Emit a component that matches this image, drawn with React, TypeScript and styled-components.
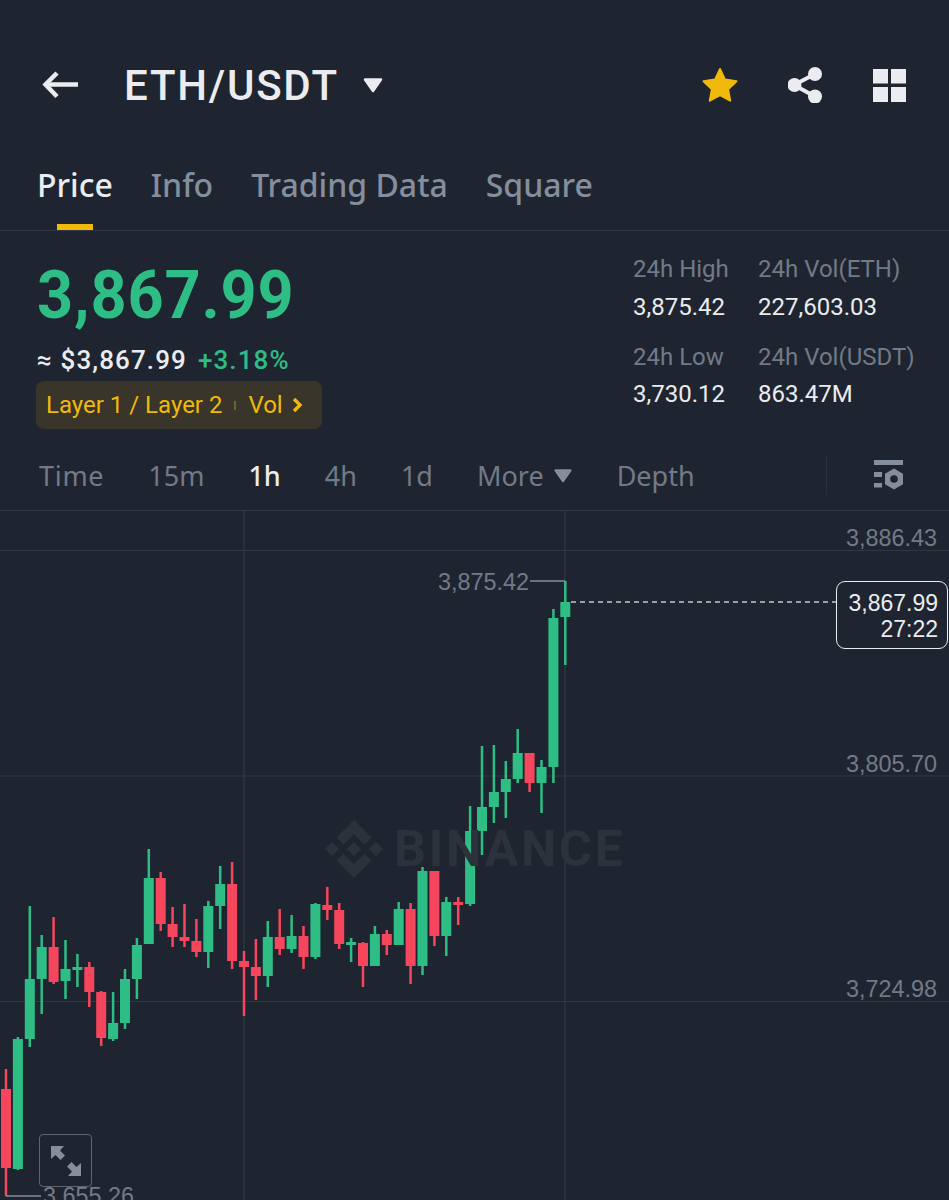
import * as React from 'react';
import styled, { createGlobalStyle } from 'styled-components';

const Colors = {
  bg: '#1f2530',
  line: '#323843',
  text: '#eaecef',
  muted: '#848e9c',
  mutedDark: '#727a87',
  green: '#2ebd85',
  red: '#f6465d',
  gold: '#f0b90b',
};

const GlobalStyle = createGlobalStyle`
  html, body {
    margin: 0;
    padding: 0;
    background: ${Colors.bg};
  }
  * { box-sizing: border-box; }
`;

const Page = styled.div`
  width: 949px;
  height: 1200px;
  overflow: hidden;
  background: ${Colors.bg};
  color: ${Colors.text};
  font-family: 'Noto Sans', sans-serif;
`;

const TopBar = styled.header`
  display: flex;
  align-items: center;
  height: 130px;
  margin-top: 20px;
  padding: 0 43px 0 42px;
`;

const Pair = styled.h1`
  margin: 0 24px 0 46px;
  font-family: Roboto, sans-serif;
  font-size: 42px;
  font-weight: 500;
  letter-spacing: 1.75px;
`;

const TopIcons = styled.div`
  display: flex;
  align-items: center;
  gap: 49.5px;
  margin-left: auto;
`;

const Tabs = styled.nav`
  display: flex;
  gap: 38px;
  height: 81px;
  padding: 17px 0 0 37px;
  border-bottom: 1px solid ${Colors.line};
`;

const Tab = styled.div<{ $active?: boolean }>`
  position: relative;
  height: 63px;
  font-size: 32px;
  font-weight: 500;
  line-height: 36px;
  color: ${(p) => (p.$active ? Colors.text : Colors.muted)};

  ${(p) =>
    p.$active &&
    `&::after {
      content: '';
      position: absolute;
      left: 20px;
      bottom: 0;
      width: 36px;
      height: 6px;
      background: ${Colors.gold};
    }`}
`;

const Summary = styled.section`
  display: flex;
  justify-content: space-between;
  height: 210px;
  padding: 23px 37px 0 37px;
`;

const PriceColumn = styled.div`
  display: flex;
  flex-direction: column;
  align-items: flex-start;
`;

const BigPrice = styled.div`
  height: 84px;
  font-family: Roboto, sans-serif;
  font-size: 66px;
  font-weight: 700;
  line-height: 84px;
  letter-spacing: 0.9px;
  color: ${Colors.green};
  transform: scaleX(0.955);
  transform-origin: left center;
`;

const FiatRow = styled.div`
  display: flex;
  gap: 11px;
  height: 43px;
  font-family: Roboto, sans-serif;
  font-size: 26px;
  font-weight: 500;
  line-height: 45px;
  letter-spacing: 1.1px;
`;

const Change = styled.span`
  color: ${Colors.green};
`;

const TagRow = styled.div`
  display: flex;
  align-items: center;
  width: 286px;
  height: 48px;
  padding-left: 10px;
  margin-left: -1px;
  border-radius: 8px;
  background: #39352a;
  color: ${Colors.gold};
  font-family: Roboto, sans-serif;
  font-size: 24px;
`;

const TagDivider = styled.span`
  width: 2px;
  height: 9px;
  margin: 0 12px 0 12px;
  background: #6f6329;
`;

const TagChevron = styled.span`
  display: flex;
  margin-left: 9px;
`;

const Stats = styled.div`
  display: grid;
  grid-template-columns: 125px 155px;
  grid-template-rows: 38px 50px 37px 36px;
  margin: -3px -1px 0 0;
`;

const StatCell = styled.div<{ $value?: boolean }>`
  font-family: Roboto, sans-serif;
  font-size: 24px;
  line-height: 36px;
  white-space: nowrap;
  color: ${(p) => (p.$value ? Colors.text : Colors.mutedDark)};
`;

const Toolbar = styled.div`
  display: flex;
  align-items: center;
  height: 70px;
  padding: 0 45px 0 39px;
  gap: 44px;
  border-bottom: 1px solid ${Colors.line};
`;

const Interval = styled.span<{ $active?: boolean }>`
  display: flex;
  align-items: center;
  gap: 9px;
  font-size: 27px;
  font-weight: ${(p) => (p.$active ? 500 : 400)};
  color: ${(p) => (p.$active ? Colors.text : Colors.mutedDark)};

  &:first-child {
    letter-spacing: 0.7px;
  }
`;

const ToolbarEnd = styled.div`
  display: flex;
  align-items: center;
  height: 40px;
  margin: -2px 0 0 auto;
  padding-left: 47px;
  border-left: 1px solid #2b313b;
`;

const Chart = styled.div`
  position: relative;
  height: 689px;
  overflow: hidden;
`;

const ChartSvg = styled.svg`
  display: block;
`;

const AxisLabel = styled.span<{ $top: number; $left?: number }>`
  position: absolute;
  top: ${(p) => p.$top}px;
  ${(p) => (p.$left !== undefined ? `left: ${p.$left}px;` : 'right: 12px;')}
  font-family: 'Liberation Sans', sans-serif;
  font-size: 23.4px;
  line-height: 28px;
  color: ${Colors.mutedDark};
`;

const LivePrice = styled.div`
  position: absolute;
  top: 70px;
  left: 836px;
  width: 112px;
  height: 68px;
  padding: 8px 9px 0 0;
  border: 1.5px solid ${Colors.text};
  border-radius: 9px;
  background: ${Colors.bg};
  font-family: 'Liberation Sans', sans-serif;
  font-size: 23px;
  line-height: 26px;
  text-align: right;
`;

const ExpandButton = styled.div`
  position: absolute;
  top: 623px;
  left: 39px;
  display: flex;
  align-items: center;
  justify-content: center;
  width: 53px;
  height: 53px;
  border: 1.5px solid #5c6472;
  border-radius: 4px;
`;

const Watermark = styled.div`
  position: absolute;
  top: 309px;
  left: 325px;
  display: flex;
  align-items: center;
  gap: 11px;
  color: #2c323c;
`;

const WatermarkText = styled.span`
  font-family: Roboto, sans-serif;
  font-size: 50px;
  font-weight: 700;
  line-height: 58px;
  letter-spacing: 2.8px;
`;

// [colour, wick top, body top, body bottom, wick bottom], read off in page coordinates
type Candle = ['g' | 'r', number, number, number, number];
const candles: Candle[] = [
  ['r', 1069, 1089, 1168, 1196],
  ['g', 1037, 1039, 1169, 1170],
  ['g', 906, 979, 1039, 1047],
  ['g', 935, 947, 979, 1014],
  ['r', 917, 947, 982, 984],
  ['g', 940, 969, 981, 999],
  ['g', 954, 967, 970, 987],
  ['r', 962, 967, 992, 1007],
  ['r', 991, 992, 1038, 1046],
  ['g', 992, 1023, 1039, 1041],
  ['g', 969, 979, 1023, 1029],
  ['g', 938, 945, 979, 999],
  ['g', 849, 878, 944, 944],
  ['r', 872, 878, 924, 931],
  ['r', 907, 924, 937, 947],
  ['r', 904, 937, 941, 947],
  ['r', 919, 941, 952, 957],
  ['g', 901, 906, 952, 968],
  ['g', 866, 884, 906, 929],
  ['r', 862, 884, 961, 969],
  ['r', 951, 961, 967, 1016],
  ['r', 939, 967, 976, 1000],
  ['g', 921, 937, 976, 987],
  ['r', 909, 937, 949, 955],
  ['g', 915, 936, 949, 953],
  ['r', 926, 936, 957, 969],
  ['g', 903, 904, 957, 959],
  ['r', 887, 905, 910, 920],
  ['r', 903, 910, 944, 949],
  ['g', 938, 942, 944, 962],
  ['r', 942, 943, 966, 987],
  ['g', 926, 934, 966, 966],
  ['r', 930, 934, 945, 955],
  ['g', 902, 909, 945, 945],
  ['r', 903, 909, 966, 984],
  ['g', 867, 871, 966, 975],
  ['r', 871, 871, 936, 946],
  ['g', 897, 902, 936, 956],
  ['r', 897, 902, 905, 925],
  ['g', 806, 831, 904, 906],
  ['g', 746, 807, 831, 855],
  ['g', 745, 792, 807, 823],
  ['g', 761, 779, 792, 818],
  ['g', 729, 753, 779, 783],
  ['r', 753, 753, 783, 792],
  ['g', 760, 767, 783, 813],
  ['g', 609, 618, 767, 783],
  ['g', 581, 602, 617, 665],
];

const candleX = (i: number) => 6 + i * 11.9;

const BackIcon = () => (
  <svg width="36" height="28" viewBox="0 0 36 28" fill="none" stroke={Colors.text} strokeWidth="4.5">
    <path d="M36 13.5H4" />
    <path d="M15 2L3.5 13.5L15 25.5" />
  </svg>
);

const CaretIcon = ({ color, width, height }: { color: string; width: number; height: number }) => (
  <svg width={width} height={height} viewBox="0 0 20 15">
    <path d="M2 1.5H18L10 13Z" fill={color} stroke={color} strokeWidth="2.5" strokeLinejoin="round" />
  </svg>
);

const StarIcon = () => (
  <svg width="36" height="36" viewBox="0 0 36 36">
    <path
      d="M18 2L23 12.6L34.5 14.2L26.1 22.2L28.2 33.7L18 28.2L7.8 33.7L9.9 22.2L1.5 14.2L13 12.6Z"
      fill={Colors.gold}
      stroke={Colors.gold}
      strokeWidth="2"
      strokeLinejoin="round"
    />
  </svg>
);

const ShareIcon = () => (
  <svg width="36" height="36" viewBox="0 0 36 36" fill={Colors.text} stroke={Colors.text}>
    <path d="M27 7L6 18L27 29.5" fill="none" strokeWidth="4" />
    <circle cx="27" cy="7" r="7" stroke="none" />
    <circle cx="6.5" cy="18" r="7" stroke="none" />
    <circle cx="27" cy="29.5" r="7" stroke="none" />
  </svg>
);

const GridIcon = () => (
  <svg width="33" height="33" viewBox="0 0 33 33" fill={Colors.text}>
    <rect x="0" y="0" width="15" height="14.5" />
    <rect x="18" y="0" width="15" height="14.5" />
    <rect x="0" y="18" width="15" height="15" />
    <rect x="18" y="18" width="15" height="15" />
  </svg>
);

const ChevronIcon = () => (
  <svg width="11" height="16" viewBox="0 0 11 16" fill="none" stroke={Colors.gold} strokeWidth="3.4">
    <path d="M2 2L8 8L2 14" />
  </svg>
);

const SettingsIcon = () => (
  <svg width="30" height="30" viewBox="0 0 30 30" fill={Colors.muted}>
    <rect x="0" y="0" width="29" height="5" />
    <rect x="0" y="12" width="8" height="5" />
    <rect x="0" y="23" width="8" height="4.5" />
    <path
      fillRule="evenodd"
      d="M20 8.5L29 13.7V24.2L20 29.5L11 24.2V13.7ZM20 15.2A3.8 3.8 0 1 0 20 22.8A3.8 3.8 0 1 0 20 15.2Z"
    />
  </svg>
);

const ExpandIcon = () => (
  <svg width="32" height="32" viewBox="0 0 32 32" fill={Colors.muted}>
    <path d="M1 1H14L10 5.5L15 10.5L10.5 15L5.5 10L1 14Z" />
    <path d="M31 31H18L22 26.5L17 21.5L21.5 17L26.5 22L31 18Z" />
  </svg>
);

const BinanceLogo = () => (
  <svg width="58" height="58" viewBox="0 0 58 58" fill="currentColor">
    <path d="M29 0L46.5 17.5L39.5 24.5L29 14L18.5 24.5L11.5 17.5Z" />
    <path d="M29 58L11.5 40.5L18.5 33.5L29 44L39.5 33.5L46.5 40.5Z" />
    <path d="M7 22L14 29L7 36L0 29Z" />
    <path d="M51 22L58 29L51 36L44 29Z" />
    <path d="M29 22L36 29L29 36L22 29Z" />
  </svg>
);

const PriceChart = () => (
  <ChartSvg width="949" height="689" viewBox="0 511 949 689">
    <g stroke={Colors.line} strokeWidth="1.2">
      <path d="M0 550.5H949" />
      <path d="M0 776H949" />
      <path d="M0 1001.5H949" />
      <path d="M244 510V1200" />
      <path d="M565 510V1200" />
    </g>
    {candles.map(([c, wickTop, top, bottom, wickBottom], i) => {
      const x = candleX(i);
      const fill = c === 'g' ? Colors.green : Colors.red;
      return (
        <g key={i} fill={fill}>
          <rect x={x - 1.25} y={wickTop} width="2.5" height={wickBottom - wickTop} />
          <rect x={x - 5} y={top} width="10" height={Math.max(bottom - top, 3)} />
        </g>
      );
    })}
    <path d="M530 581H565" stroke={Colors.muted} strokeWidth="1.5" fill="none" />
    <path d="M6 1196H41" stroke={Colors.muted} strokeWidth="1.5" fill="none" />
    <path d="M571 602H836" stroke="#c4c8ce" strokeWidth="1.5" strokeDasharray="5 4" fill="none" />
  </ChartSvg>
);

const App = () => (
  <Page>
    <GlobalStyle />
    <TopBar>
      <BackIcon />
      <Pair>ETH/USDT</Pair>
      <CaretIcon color={Colors.text} width={20} height={15} />
      <TopIcons>
        <StarIcon />
        <ShareIcon />
        <GridIcon />
      </TopIcons>
    </TopBar>
    <Tabs>
      <Tab $active>Price</Tab>
      <Tab>Info</Tab>
      <Tab>Trading Data</Tab>
      <Tab>Square</Tab>
    </Tabs>
    <Summary>
      <PriceColumn>
        <BigPrice>3,867.99</BigPrice>
        <FiatRow>
          <span>≈ $3,867.99</span>
          <Change>+3.18%</Change>
        </FiatRow>
        <TagRow>
          Layer 1 / Layer 2
          <TagDivider />
          Vol
          <TagChevron>
            <ChevronIcon />
          </TagChevron>
        </TagRow>
      </PriceColumn>
      <Stats>
        <StatCell>24h High</StatCell>
        <StatCell>24h Vol(ETH)</StatCell>
        <StatCell $value>3,875.42</StatCell>
        <StatCell $value>227,603.03</StatCell>
        <StatCell>24h Low</StatCell>
        <StatCell>24h Vol(USDT)</StatCell>
        <StatCell $value>3,730.12</StatCell>
        <StatCell $value>863.47M</StatCell>
      </Stats>
    </Summary>
    <Toolbar>
      <Interval>Time</Interval>
      <Interval>15m</Interval>
      <Interval $active>1h</Interval>
      <Interval>4h</Interval>
      <Interval>1d</Interval>
      <Interval>
        More
        <CaretIcon color={Colors.muted} width={20} height={14} />
      </Interval>
      <Interval>Depth</Interval>
      <ToolbarEnd>
        <SettingsIcon />
      </ToolbarEnd>
    </Toolbar>
    <Chart>
      <Watermark>
        <BinanceLogo />
        <WatermarkText>BINANCE</WatermarkText>
      </Watermark>
      <PriceChart />
      <AxisLabel $top={13}>3,886.43</AxisLabel>
      <AxisLabel $top={239}>3,805.70</AxisLabel>
      <AxisLabel $top={464}>3,724.98</AxisLabel>
      <AxisLabel $top={57} $left={438}>3,875.42</AxisLabel>
      <AxisLabel $top={671} $left={43}>3,655.26</AxisLabel>
      <LivePrice>
        3,867.99
        <br />
        27:22
      </LivePrice>
      <ExpandButton>
        <ExpandIcon />
      </ExpandButton>
    </Chart>
  </Page>
);

export default App;
